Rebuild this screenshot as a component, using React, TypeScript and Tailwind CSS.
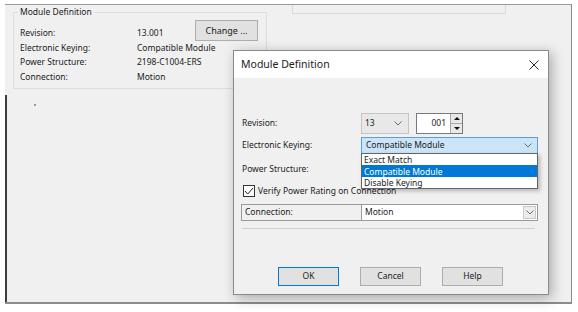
import React from "react";

const INFO_ROWS = [
  { label: "Electronic Keying:", value: "Compatible Module" },
  { label: "Power Structure:", value: "2198-C1004-ERS" },
  { label: "Connection:", value: "Motion" },
];

const KEYING_OPTIONS = ["Exact Match", "Compatible Module", "Disable Keying"];

function Chevron() {
  return (
    <svg width="8" height="5" viewBox="0 0 8 5" className="shrink-0">
      <path d="M0.5 0.5 L4 4 L7.5 0.5" fill="none" stroke="#6d6d6d" strokeWidth="1" />
    </svg>
  );
}

function ModuleGroup() {
  return (
    <div className="relative ml-[8px] mt-[7px] w-[254px] h-[77px] border border-[#dcdcdc] pl-[6px] pr-[8px] pt-[13px] leading-[14.5px]">
      <span className="absolute -top-[7px] left-[4px] px-[2px] bg-[#f0f0f0] leading-[12px]">Module Definition</span>
      <div className="flex items-end">
        <span className="w-[117px]">Revision:</span>
        <span>13.001</span>
        <button className="ml-auto -mt-[7px] w-[63px] h-[21px] border border-[#adadad] bg-[#e1e1e1] text-[9px] leading-none">
          Change ...
        </button>
      </div>
      {INFO_ROWS.map((r) => (
        <div key={r.label} className="flex">
          <span className="w-[117px]">{r.label}</span>
          <span>{r.value}</span>
        </div>
      ))}
    </div>
  );
}

function Dialog() {
  return (
    <div className="absolute left-[233px] top-[50px] w-[316px] h-[245px] flex flex-col border border-[#8a8a8a] bg-[#f0f0f0] shadow-[3px_3px_12px_rgba(0,0,0,0.3)]">
      {/* title bar */}
      <div className="h-[27px] shrink-0 bg-white flex items-center justify-between pl-[7px] pr-[9px] text-[10.5px]">
        <span>Module Definition</span>
        <svg width="10" height="10" viewBox="0 0 10 10">
          <path d="M0.5 0.5 L9.5 9.5 M9.5 0.5 L0.5 9.5" stroke="#2b2b2b" strokeWidth="1" />
        </svg>
      </div>

      <div className="relative flex-1 flex flex-col pl-[8px] pr-[9px] pt-[35px]">
        {/* Revision */}
        <div className="flex items-center h-[21px]">
          <span className="w-[119px]">Revision:</span>
          <div className="w-[48px] h-[21px] flex items-center justify-between border border-[#c4c4c4] bg-[#e8e8e8] pl-[3px] pr-[6px]">
            <span>13</span>
            <Chevron />
          </div>
          <div className="ml-[7px] w-[47px] h-[21px] flex border border-[#7a7a7a] bg-white">
            <span className="flex-1 flex items-center justify-end pr-[4px]">001</span>
            <div className="w-[12px] flex flex-col border-l border-[#a8a8a8] bg-[#e9e9e9]">
              <div className="flex-1 flex items-center justify-center border-b border-[#a8a8a8]">
                <svg width="6" height="3" viewBox="0 0 6 3"><path d="M0 3 L3 0 L6 3 Z" fill="#111" /></svg>
              </div>
              <div className="flex-1 flex items-center justify-center">
                <svg width="6" height="3" viewBox="0 0 6 3"><path d="M0 0 L3 3 L6 0 Z" fill="#111" /></svg>
              </div>
            </div>
          </div>
        </div>

        {/* Electronic keying */}
        <div className="flex items-center h-[17px] mt-[3px]">
          <span className="w-[119px]">Electronic Keying:</span>
          <div className="w-[177px] h-[17px] flex items-center justify-between border border-[#5a9de0] bg-[#cce4f7] pl-[4px] pr-[5px]">
            <span>Compatible Module</span>
            <Chevron />
          </div>
        </div>

        {/* Power structure */}
        <div className="flex items-center h-[16px] mt-[7px]">
          <span>Power Structure:</span>
        </div>

        {/* Verify checkbox */}
        <div className="flex items-center h-[14px] mt-[7px] ml-[1px] gap-[3px]">
          <div className="w-[12px] h-[12px] border border-[#333] bg-white flex items-center justify-center">
            <svg width="10" height="8" viewBox="0 0 10 8">
              <path d="M1 4 L3.8 7 L9 1" fill="none" stroke="#222" strokeWidth="1" />
            </svg>
          </div>
          <span>Verify Power Rating on Connection</span>
        </div>

        {/* Connection */}
        <div className="flex h-[17px] mt-[6px] -ml-[1px] w-[297px] border border-[#9a9a9a]">
          <div className="w-[120px] flex items-center pl-[3px] border-r border-[#9a9a9a]">Connection:</div>
          <div className="flex-1 flex items-center justify-between bg-white pl-[3px] pr-[1px]">
            <span>Motion</span>
            <div className="w-[13px] h-[13px] flex items-center justify-center border border-[#c8c8c8] bg-[#ececec]">
              <Chevron />
            </div>
          </div>
        </div>

        <div className="mt-[7px] h-px w-[293px] bg-[#cfcfcf]" />

        {/* Buttons */}
        <div className="flex mt-[38px] pl-[36px] gap-[21px]">
          <button className="w-[61px] h-[19px] border border-[#0078d7] bg-[#e1e1e1] leading-none">OK</button>
          <button className="w-[61px] h-[19px] border border-[#adadad] bg-[#e1e1e1] leading-none">Cancel</button>
          <button className="w-[61px] h-[19px] border border-[#adadad] bg-[#e1e1e1] leading-none">Help</button>
        </div>

        {/* open dropdown list */}
        <div className="absolute left-[127px] top-[75px] w-[177px] flex flex-col border border-[#646464] bg-white shadow-[2px_2px_4px_rgba(0,0,0,0.25)] leading-[11px]">
          {KEYING_OPTIONS.map((o) => (
            <div
              key={o}
              className={
                o === "Compatible Module"
                  ? "h-[12px] px-[2px] bg-[#0078d7] text-white flex items-center"
                  : "h-[11px] px-[2px] flex items-center"
              }
            >
              {o}
            </div>
          ))}
        </div>
      </div>
    </div>
  );
}

export default function App() {
  return (
    <div className="relative w-[578px] h-[312px] overflow-hidden bg-white pl-[5px] pt-[4px] font-['Noto_Sans',sans-serif] text-[8.5px] text-[#1b1b1b]">
      <div className="flex flex-col w-[567px] h-[300px] bg-[#f0f0f0] border-t border-r border-b-2 border-t-[#9a9a9a] border-r-[#8c8c8c] border-b-[#8c8c8c]">
        <div className="flex items-start h-[90px] shrink-0">
          <ModuleGroup />
          <div className="ml-[25px] w-[214px] h-[9px] border border-t-0 border-[#dadada]" />
        </div>
        <div className="flex-1 border-l-2 border-[#3c3c3c] pl-[27px] pt-[9px]">
          <div className="w-[2px] h-[2px] bg-[#9a9a9a]" />
        </div>
      </div>
      <Dialog />
    </div>
  );
}
